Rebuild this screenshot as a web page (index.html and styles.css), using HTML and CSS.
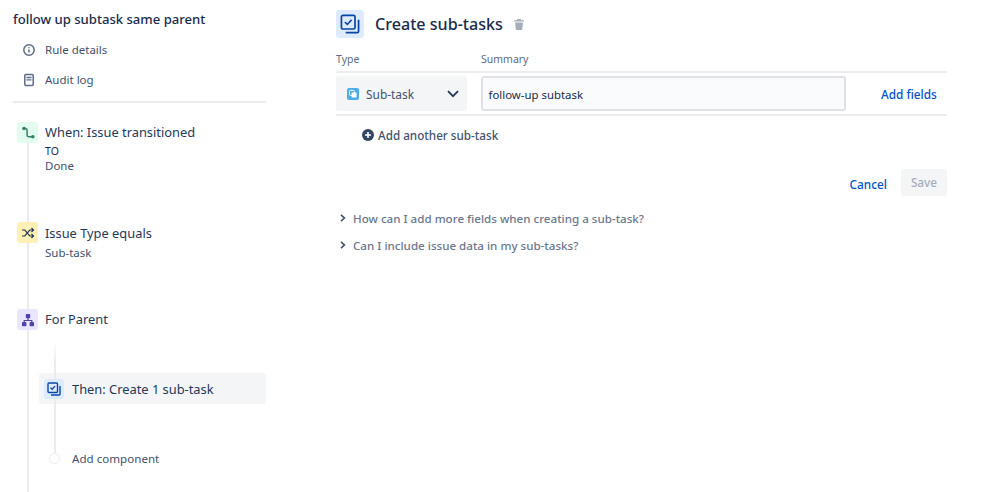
FILE: index.html
```html
<!DOCTYPE html>
<html lang="en">
<head>
<meta charset="utf-8">
<title>Create sub-tasks</title>
<link rel="stylesheet" href="styles.css">
</head>
<body>
<div class="app">
  <aside class="sidebar">
    <h1 class="rule-title">follow up subtask same parent</h1>
    <nav class="side-nav">
      <a class="nav-row">
        <svg class="nav-icon" viewBox="0 0 14 14"><circle cx="7" cy="7" r="5.2" fill="none" stroke="#5e6c84" stroke-width="1.5"/><path d="M7 6.5v3M7 4.2v1" stroke="#5e6c84" stroke-width="1.5"/></svg>
        <span>Rule details</span>
      </a>
      <a class="nav-row">
        <svg class="nav-icon" viewBox="0 0 14 14"><rect x="2.8" y="1.5" width="8.4" height="11" rx="1" fill="none" stroke="#5e6c84" stroke-width="1.5"/><path d="M4.5 4.5h5M4.5 6.8h5" stroke="#5e6c84" stroke-width="1.3"/></svg>
        <span>Audit log</span>
      </a>
    </nav>
    <div class="timeline">
      <div class="step step-when">
        <span class="badge badge-green">
          <svg viewBox="0 0 14 14" width="14" height="14"><path d="M3 2.5h1.5c1.2 0 1.6.7 1.6 1.8v4.4c0 1.3.6 2 1.8 2h3.6" fill="none" stroke="#36806a" stroke-width="1.5"/><circle cx="3" cy="2.5" r="1.8" fill="#36806a"/><circle cx="11.8" cy="10.7" r="1.8" fill="#36806a"/></svg>
        </span>
        <div class="step-body">
          <div class="step-title">When: Issue transitioned</div>
          <div class="step-to">TO</div>
          <div class="step-sub">Done</div>
        </div>
      </div>
      <div class="step step-cond">
        <span class="badge badge-yellow">
          <svg viewBox="0 0 14 14" width="14" height="14"><path d="M1 4h2.8l5 6H12M1 10h2.8l5-6H12M10.5 2l2 2-2 2M10.5 8l2 2-2 2" fill="none" stroke="#253858" stroke-width="1.2"/></svg>
        </span>
        <div class="step-body step-body-low">
          <div class="step-title">Issue Type equals</div>
          <div class="step-sub step-sub-gap">Sub-task</div>
        </div>
      </div>
      <div class="step step-branch">
        <span class="badge badge-purple">
          <svg viewBox="0 0 14 14" width="14" height="14"><g fill="#5243aa"><rect x="4.8" y="1" width="4.4" height="4.2" rx=".8"/><rect x="1" y="9" width="4.4" height="4.2" rx=".8"/><rect x="8.6" y="9" width="4.4" height="4.2" rx=".8"/></g><path d="M7 5v2.5M3.2 9V7.5h7.6V9" fill="none" stroke="#5243aa" stroke-width="1.2"/></svg>
        </span>
        <div class="step-body">
          <div class="step-title">For Parent</div>
        </div>
      </div>
      <div class="branch">
        <div class="action-row">
          <span class="badge-small">
            <svg viewBox="0 0 14 14" width="14" height="14"><rect x="1" y="1" width="9.5" height="9.5" rx="1" fill="none" stroke="#0747a6" stroke-width="1.4"/><path d="M3.4 5.6l1.7 1.7 3-3.2" fill="none" stroke="#0747a6" stroke-width="1.3"/><path d="M13 4v8a1 1 0 0 1-1 1H4" fill="none" stroke="#0747a6" stroke-width="1.4"/></svg>
          </span>
          <span class="step-title">Then: Create 1 sub-task</span>
        </div>
        <div class="add-row">
          <span class="add-dot"></span>
          <span class="add-label">Add component</span>
        </div>
      </div>
    </div>
  </aside>

  <main class="editor">
    <header class="editor-head">
      <span class="head-icon">
        <svg viewBox="0 0 14 14" width="20" height="20"><rect x="1" y="1" width="9.5" height="9.5" rx="1" fill="none" stroke="#0747a6" stroke-width="1.2"/><path d="M3.4 5.6l1.7 1.7 3-3.2" fill="none" stroke="#0747a6" stroke-width="1.1"/><path d="M13 4v8a1 1 0 0 1-1 1H4" fill="none" stroke="#0747a6" stroke-width="1.2"/></svg>
      </span>
      <h2 class="editor-title">Create sub-tasks</h2>
      <svg class="trash" viewBox="0 0 12 12" width="12" height="12"><path d="M1 2.2h10v1.3H1zM4.2 1h3.6v1.2H4.2z" fill="#a5adba"/><path d="M2 4.4h8l-.8 6.8a.8.8 0 0 1-.8.7H3.6a.8.8 0 0 1-.8-.7z" fill="#a5adba"/></svg>
    </header>

    <div class="field-labels">
      <span class="label-type">Type</span>
      <span>Summary</span>
    </div>
    <div class="task-row">
      <div class="type-select">
        <svg class="subtask-icon" viewBox="0 0 12 12" width="12" height="12"><rect width="12" height="12" rx="2" fill="#4bade8"/><rect x="2.4" y="2.4" width="5" height="5" rx="1" fill="none" stroke="#fff" stroke-width="1"/><rect x="4.6" y="4.6" width="5" height="5" rx=".8" fill="#fff"/></svg>
        <span class="type-name">Sub-task</span>
        <svg class="chev" viewBox="0 0 12 8" width="12" height="8"><path d="M1 1.2l5 5 5-5" fill="none" stroke="#253858" stroke-width="1.8"/></svg>
      </div>
      <div class="summary-input">follow-up subtask</div>
      <a class="link add-fields">Add fields</a>
    </div>

    <a class="add-another">
      <svg viewBox="0 0 12 12" width="12" height="12"><circle cx="6" cy="6" r="6" fill="#344563"/><path d="M6 3v6M3 6h6" stroke="#fff" stroke-width="1.6"/></svg>
      <span>Add another sub-task</span>
    </a>

    <div class="actions">
      <a class="link">Cancel</a>
      <span class="save">Save</span>
    </div>

    <div class="faq">
      <div class="faq-row">
        <svg viewBox="0 0 6 8" width="6" height="8"><path d="M1 .8L4.4 4 1 7.2" fill="none" stroke="#42526e" stroke-width="1.6"/></svg>
        <span>How can I add more fields when creating a sub-task?</span>
      </div>
      <div class="faq-row">
        <svg viewBox="0 0 6 8" width="6" height="8"><path d="M1 .8L4.4 4 1 7.2" fill="none" stroke="#42526e" stroke-width="1.6"/></svg>
        <span>Can I include issue data in my sub-tasks?</span>
      </div>
    </div>
  </main>
</div>
</body>
</html>
```
FILE: styles.css
```css
* { box-sizing: border-box; }
html, body { margin: 0; height: 100%; overflow: hidden; background: #fff; }
body { font-family: "Noto Sans", "Open Sans", sans-serif; color: #172b4d; }

.app { display: flex; height: 492px; overflow: hidden; }

.sidebar { width: 266px; margin-right: 70px; padding: 9px 0 0 13px; flex: none; }
.rule-title { margin: 0; font-size: 13.1px; line-height: 20px; font-weight: 500; color: #172b4d; }

.side-nav { margin-top: 6px; padding: 0 0 6px; border-bottom: 2px solid #ebecf0; }
.nav-row { display: flex; align-items: center; height: 30px; padding-left: 9px; font-size: 11.5px; color: #42526e; }
.nav-row span { margin-top: -2px; }
.nav-icon { width: 14px; height: 14px; margin-right: 9px; flex: none; }

.timeline { position: relative; margin-left: 4px; padding-top: 19px; height: 391px; }
.timeline::before { content: ""; position: absolute; left: 10px; top: 40px; bottom: 0; width: 2px; background: #ebecf0; }

.step { position: relative; display: flex; }
.step-when { height: 100px; }
.step-cond { height: 87px; }
.step-branch { height: 43px; }

.badge { flex: none; display: flex; align-items: center; justify-content: center; width: 21px; height: 21px; border-radius: 3px; margin-right: 7px; }
.badge-green { background: #e3fcef; }
.badge-yellow { background: #fff0b3; }
.badge-purple { background: #eae6ff; }

.step-body-low { padding-top: 1px; }
.step-title { font-size: 12.85px; line-height: 21px; color: #253858; }
.step-to { font-size: 10.5px; line-height: 14px; margin-top: 1px; color: #172b4d; }
.step-sub { font-size: 11.5px; line-height: 16px; color: #42526e; }
.step-sub-gap { margin-top: 1px; }

.branch { position: relative; margin-top: 21px; }
.branch::before { content: ""; position: absolute; z-index: 1; left: 37px; top: -33px; height: 113px; width: 2px; background: linear-gradient(#fff, #ebecf0 24px); }

.action-row { position: relative; display: flex; align-items: center; margin-left: 22px; height: 31px; padding-left: 5px; background: #f4f5f7; border-radius: 3px; }
.action-row .step-title { padding-top: 1px; }
.badge-small { position: relative; z-index: 2; flex: none; display: flex; align-items: center; justify-content: center; width: 20px; height: 20px; margin-right: 8px; background: #deebff; border-radius: 3px; }

.add-row { position: relative; display: flex; align-items: center; margin: 44px 0 0 32px; height: 20px; }
.add-dot { flex: none; width: 11px; height: 11px; margin-right: 12px; border-radius: 50%; background: #fff; border: 1.5px solid #ebecf0; }
.add-label { font-size: 11.6px; color: #42526e; }

.editor { width: 611px; flex: none; padding-top: 10px; }
.editor-head { display: flex; align-items: center; height: 28px; }
.head-icon { display: flex; align-items: center; justify-content: center; width: 28px; height: 28px; margin-right: 11px; background: #deebff; border-radius: 3px; }
.editor-title { margin: 0 10px 0 0; font-size: 16.1px; line-height: 28px; font-weight: 500; color: #172b4d; }
.trash { margin-bottom: 1px; }

.field-labels { display: flex; margin-top: 15px; height: 18px; font-size: 10.5px; line-height: 12px; color: #5e6c84; }
.label-type { width: 145px; }

.task-row { display: flex; align-items: center; height: 45px; border-top: 2px solid #ebecf0; border-bottom: 2px solid #ebecf0; }
.type-select { display: flex; align-items: center; width: 131px; height: 35px; margin-right: 14px; padding: 0 8px 0 11px; background: #f4f5f7; border-radius: 3px; font-size: 11.9px; color: #42526e; }
.subtask-icon { flex: none; margin-right: 7px; }
.type-name { flex: 1; }
.summary-input { width: 365px; height: 35px; padding: 0 5.5px; line-height: 33px; margin-right: 35px; background: #fafbfc; border: 2px solid #dfe1e6; border-radius: 3px; font-size: 11.4px; color: #172b4d; }
.link { font-size: 11.8px; line-height: 20px; padding-top: 2px; font-weight: 500; color: #0052cc; }
.add-fields { margin-top: -2px; }

.add-another { display: flex; align-items: center; gap: 4px; margin: 9px 0 0 26px; height: 20px; font-size: 11.7px; font-weight: 500; color: #42526e; }

.actions { display: flex; align-items: center; justify-content: flex-end; gap: 14px; margin-top: 24px; }
.save { width: 46px; height: 27px; line-height: 27px; text-align: center; background: #f4f5f7; border-radius: 3px; font-size: 11.8px; font-weight: 500; color: #a5adba; }

.faq { margin-top: 8px; }
.faq-row { display: flex; align-items: center; gap: 7px; height: 28px; padding-left: 4px; font-size: 11.6px; font-weight: 500; color: #6b778c; }
.faq-row + .faq-row { margin-top: -1px; }
```
